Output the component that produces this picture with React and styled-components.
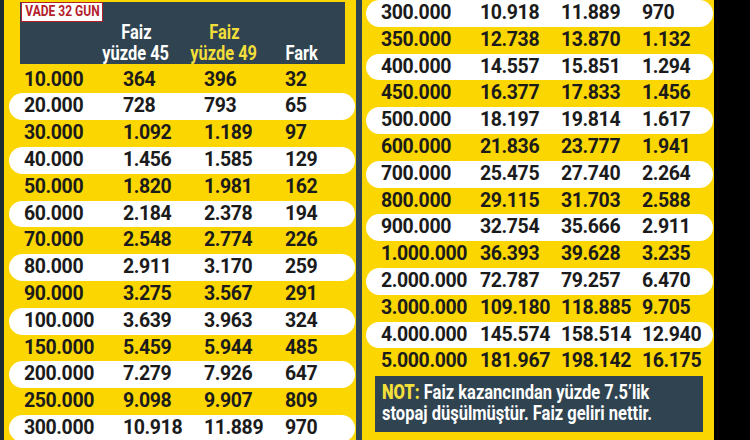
import React from 'react';
import styled, { createGlobalStyle } from 'styled-components';

const GlobalStyle = createGlobalStyle`
  html, body {
    margin: 0;
    padding: 0;
    background: #000;
    overflow: hidden;
  }
`;

const YELLOW = '#fcd600';
const SLATE = '#2f4350';
const SANS = `Roboto, "Liberation Sans", sans-serif`;

const Page = styled.div`
  display: flex;
  width: 750px;
  height: 440px;
  background: #000;
  overflow: hidden;
`;

const Edge = styled.div`
  width: 4px;
  background: #1c2a31;
`;

const Divider = styled.div`
  width: 6px;
  background: ${SLATE};
`;

const Panel = styled.div`
  display: flex;
  flex-direction: column;
  width: ${(p) => p.$width}px;
  background: ${YELLOW};
  padding: ${(p) => p.$pad};
  box-sizing: border-box;
`;

// squeezes a bold sans into the condensed look of the print headline font
const Narrow = styled.span`
  display: inline-block;
  flex-shrink: 0;
  white-space: nowrap;
  transform: scaleX(${(p) => p.$scale || 0.82});
  transform-origin: ${(p) => p.$origin || 'center'};
`;

const Header = styled.div`
  margin: 2px 0 0 11px;
  width: 325px;
  height: 66px;
  background: ${SLATE};
  box-sizing: border-box;
  display: flex;
  flex-direction: column;
  font-family: ${SANS};
  font-weight: 700;
`;

const Badge = styled.div`
  align-self: flex-start;
  margin-left: 1px;
  width: 82px;
  height: 20px;
  box-sizing: border-box;
  display: flex;
  justify-content: center;
  background: #fff;
  border: 1.5px solid #b3202a;
  color: #b3202a;
  font-size: 15px;
  line-height: 17px;
`;

const HeadGrid = styled.div`
  display: grid;
  grid-template-columns: 78px 76px 100px 56px;
  align-items: end;
`;

const HeadCell = styled.div`
  grid-column: ${(p) => p.$col};
  display: flex;
  flex-direction: column;
  align-items: center;
  font-size: 20px;
  line-height: 21px;
  color: ${(p) => (p.$accent ? '#f3df3a' : '#fff')};
`;

const Rows = styled.div`
  display: flex;
  flex-direction: column;
  margin-top: ${(p) => p.$top}px;
`;

const Row = styled.div`
  display: grid;
  grid-template-columns: 99px 81px 81px 1fr;
  padding-left: 15px;
  height: 26.8px;
  line-height: 26.8px;
  flex-shrink: 0;
  border-radius: 13.4px;
  background: ${(p) => (p.$white ? '#fff' : 'transparent')};
  font-family: ${SANS};
  font-weight: 700;
  font-size: 19.5px;
  letter-spacing: -0.4px;
  color: #1b1b1b;
  white-space: nowrap;
`;

const Note = styled.div`
  margin: 1px 0 0 9px;
  width: 328px;
  height: 56px;
  box-sizing: border-box;
  padding: 6px 0 0 7px;
  background: ${SLATE};
  color: #fff;
  font-family: ${SANS};
  font-weight: 700;
  font-size: 20px;
  line-height: 21px;
  display: flex;
  flex-direction: column;
  align-items: flex-start;
  overflow: hidden;

  b {
    color: #f3df3a;
  }
`;

const left = [
  ['10.000', '364', '396', '32'],
  ['20.000', '728', '793', '65'],
  ['30.000', '1.092', '1.189', '97'],
  ['40.000', '1.456', '1.585', '129'],
  ['50.000', '1.820', '1.981', '162'],
  ['60.000', '2.184', '2.378', '194'],
  ['70.000', '2.548', '2.774', '226'],
  ['80.000', '2.911', '3.170', '259'],
  ['90.000', '3.275', '3.567', '291'],
  ['100.000', '3.639', '3.963', '324'],
  ['150.000', '5.459', '5.944', '485'],
  ['200.000', '7.279', '7.926', '647'],
  ['250.000', '9.098', '9.907', '809'],
  ['300.000', '10.918', '11.889', '970'],
];

const right = [
  ['300.000', '10.918', '11.889', '970'],
  ['350.000', '12.738', '13.870', '1.132'],
  ['400.000', '14.557', '15.851', '1.294'],
  ['450.000', '16.377', '17.833', '1.456'],
  ['500.000', '18.197', '19.814', '1.617'],
  ['600.000', '21.836', '23.777', '1.941'],
  ['700.000', '25.475', '27.740', '2.264'],
  ['800.000', '29.115', '31.703', '2.588'],
  ['900.000', '32.754', '35.666', '2.911'],
  ['1.000.000', '36.393', '39.628', '3.235'],
  ['2.000.000', '72.787', '79.257', '6.470'],
  ['3.000.000', '109.180', '118.885', '9.705'],
  ['4.000.000', '145.574', '158.514', '12.940'],
  ['5.000.000', '181.967', '198.142', '16.175'],
];

function App() {
  return (
    <Page>
      <GlobalStyle />
      <Edge />
      <Panel $width={352} $pad="0 1px 0 5px">
        <Header>
          <Badge>
            <Narrow $scale={0.8}>VADE 32 GUN</Narrow>
          </Badge>
          <HeadGrid>
            <HeadCell $col={2}>
              <Narrow>Faiz</Narrow>
              <Narrow>yüzde 45</Narrow>
            </HeadCell>
            <HeadCell $col={3} $accent>
              <Narrow>Faiz</Narrow>
              <Narrow>yüzde 49</Narrow>
            </HeadCell>
            <HeadCell $col={4}>
              <Narrow>Fark</Narrow>
            </HeadCell>
          </HeadGrid>
        </Header>
        <Rows $top={2.6}>
          {left.map((r, i) => (
            <Row key={r[0]} $white={i % 2 === 1}>
              {r.map((c, j) => (
                <span key={j}>{c}</span>
              ))}
            </Row>
          ))}
        </Rows>
      </Panel>
      <Divider />
      <Panel $width={352} $pad="0 1px 0 4px">
        <Rows $top={0}>
          {right.map((r, i) => (
            <Row key={r[0]} $white={i % 2 === 0}>
              {r.map((c, j) => (
                <span key={j}>{c}</span>
              ))}
            </Row>
          ))}
        </Rows>
        <Note>
          <Narrow $scale={0.825} $origin="left">
            <b>NOT:</b> Faiz kazancından yüzde 7.5’lik
          </Narrow>
          <Narrow $scale={0.825} $origin="left">
            stopaj düşülmüştür. Faiz geliri nettir.
          </Narrow>
        </Note>
      </Panel>
    </Page>
  );
}

export default App;
